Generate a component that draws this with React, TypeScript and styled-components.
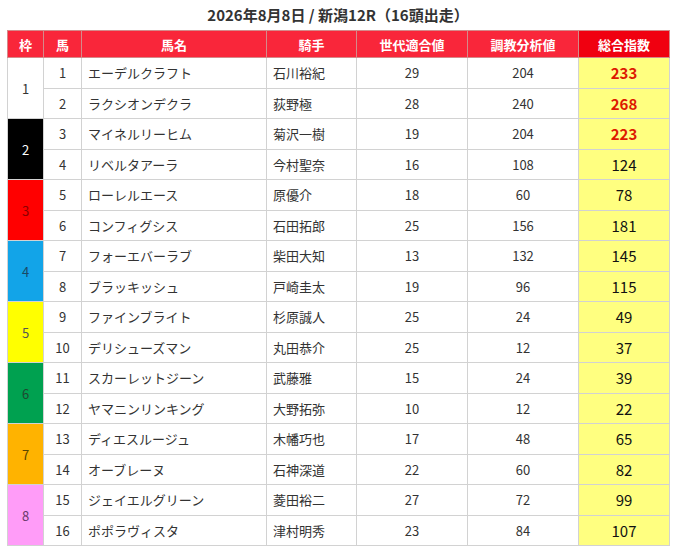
import React from "react";
import styled, { createGlobalStyle } from "styled-components";

const GlobalStyle = createGlobalStyle`
  body {
    margin: 0;
    background: #fff;
    font-family: "Noto Sans CJK JP", "Noto Sans", sans-serif;
    color: #333;
  }
`;

const frameColors: Record<number, { bg: string; fg: string }> = {
  1: { bg: "#ffffff", fg: "#333" },
  2: { bg: "#000000", fg: "#fff" },
  3: { bg: "#ff0000", fg: "#8a0000" },
  4: { bg: "#12a4e8", fg: "#1a4a66" },
  5: { bg: "#ffff00", fg: "#555" },
  6: { bg: "#00a150", fg: "#1f4a30" },
  7: { bg: "#ffb300", fg: "#5a4500" },
  8: { bg: "#ff9cf8", fg: "#6a3a6a" },
};

type Horse = {
  no: number;
  name: string;
  jockey: string;
  gen: number;
  train: number;
  total: number;
};

const horses: Horse[] = [
  { no: 1, name: "エーデルクラフト", jockey: "石川裕紀", gen: 29, train: 204, total: 233 },
  { no: 2, name: "ラクシオンデクラ", jockey: "荻野極", gen: 28, train: 240, total: 268 },
  { no: 3, name: "マイネルリーヒム", jockey: "菊沢一樹", gen: 19, train: 204, total: 223 },
  { no: 4, name: "リベルタアーラ", jockey: "今村聖奈", gen: 16, train: 108, total: 124 },
  { no: 5, name: "ローレルエース", jockey: "原優介", gen: 18, train: 60, total: 78 },
  { no: 6, name: "コンフィグシス", jockey: "石田拓郎", gen: 25, train: 156, total: 181 },
  { no: 7, name: "フォーエバーラブ", jockey: "柴田大知", gen: 13, train: 132, total: 145 },
  { no: 8, name: "ブラッキッシュ", jockey: "戸崎圭太", gen: 19, train: 96, total: 115 },
  { no: 9, name: "ファインブライト", jockey: "杉原誠人", gen: 25, train: 24, total: 49 },
  { no: 10, name: "デリシューズマン", jockey: "丸田恭介", gen: 25, train: 12, total: 37 },
  { no: 11, name: "スカーレットジーン", jockey: "武藤雅", gen: 15, train: 24, total: 39 },
  { no: 12, name: "ヤマニンリンキング", jockey: "大野拓弥", gen: 10, train: 12, total: 22 },
  { no: 13, name: "ディエスルージュ", jockey: "木幡巧也", gen: 17, train: 48, total: 65 },
  { no: 14, name: "オーブレーヌ", jockey: "石神深道", gen: 22, train: 60, total: 82 },
  { no: 15, name: "ジェイエルグリーン", jockey: "菱田裕二", gen: 27, train: 72, total: 99 },
  { no: 16, name: "ポポラヴィスタ", jockey: "津村明秀", gen: 23, train: 84, total: 107 },
];

const top3 = [...horses].sort((a, b) => b.total - a.total).slice(0, 3).map((h) => h.no);

const Page = styled.div`
  padding: 0 8px 0 7px;
`;

const Title = styled.h2`
  margin: 0;
  height: 30px;
  line-height: 29px;
  text-align: center;
  font-size: 15px;
  font-weight: 700;
  color: #333;
`;

const Table = styled.table`
  width: 662px;
  border-collapse: collapse;
  table-layout: fixed;
  font-size: 13px;
`;

// widths exclude the collapsed border, so each is one less than the column pitch
const Th = styled.th<{ $w: number; $accent?: boolean }>`
  width: ${(p) => p.$w - 1}px;
  height: 26px;
  padding: 0;
  background: ${(p) => (p.$accent ? "#f00010" : "#f9263a")};
  color: #fff;
  font-weight: 700;
  font-size: 13px;
  border: 1px solid #d48a8a;
  text-align: center;
`;

const Td = styled.td<{ $align?: "left" | "center" }>`
  height: 29.5px;
  padding: 0 6px;
  border: 1px solid #d2d2d2;
  text-align: ${(p) => p.$align || "center"};
  color: #333;
  white-space: nowrap;
`;

const FrameCell = styled.td<{ $bg: string; $fg: string }>`
  padding: 0;
  border: 1px solid #d2d2d2;
  background: ${(p) => p.$bg};
  color: ${(p) => p.$fg};
  text-align: center;
  font-size: 13px;
`;

const TotalCell = styled.td<{ $top: boolean }>`
  padding: 0;
  border: 1px solid #d2d2d2;
  background: #ffff80;
  text-align: center;
  font-size: 15px;
  font-weight: ${(p) => (p.$top ? 700 : 400)};
  color: ${(p) => (p.$top ? "#dd1a00" : "#111")};
`;

export default function App() {
  return (
    <Page>
      <GlobalStyle />
      <Title>2026年8月8日 / 新潟12R（16頭出走）</Title>
      <Table>
        <thead>
          <tr>
            <Th $w={36}>枠</Th>
            <Th $w={38}>馬</Th>
            <Th $w={185}>馬名</Th>
            <Th $w={90}>騎手</Th>
            <Th $w={111}>世代適合値</Th>
            <Th $w={111}>調教分析値</Th>
            <Th $w={91} $accent>
              総合指数
            </Th>
          </tr>
        </thead>
        <tbody>
          {horses.map((h, i) => {
            const frame = Math.floor(i / 2) + 1;
            const c = frameColors[frame];
            return (
              <tr key={h.no}>
                {i % 2 === 0 && (
                  <FrameCell rowSpan={2} $bg={c.bg} $fg={c.fg}>
                    {frame}
                  </FrameCell>
                )}
                <Td>{h.no}</Td>
                <Td $align="left">{h.name}</Td>
                <Td $align="left">{h.jockey}</Td>
                <Td>{h.gen}</Td>
                <Td>{h.train}</Td>
                <TotalCell $top={top3.includes(h.no)}>{h.total}</TotalCell>
              </tr>
            );
          })}
        </tbody>
      </Table>
    </Page>
  );
}
